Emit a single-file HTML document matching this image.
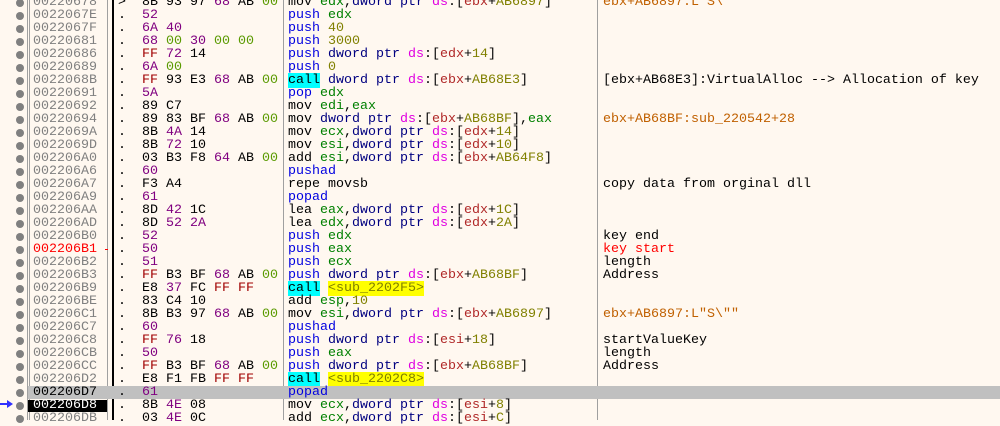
<!DOCTYPE html>
<html><head><meta charset="utf-8"><style>
body{margin:0;width:1000px;height:420px;overflow:hidden;background:#fff8f0;font-family:"Liberation Mono",monospace;font-size:13.33px;}
.r{position:absolute;left:0;width:1000px;height:13px;line-height:13px;white-space:pre;}
.r span{}
.d{position:absolute;left:16px;top:3px;width:8px;height:8px;border-radius:50%;background:#808080;}
.a{position:absolute;left:33px;color:#808080;}
.b{position:absolute;left:118px;color:#000;}
.m{position:absolute;left:288px;color:#000;}
.c{position:absolute;left:603px;color:#000;}
.vl{position:absolute;top:0;height:420px;width:1px;background:#a0a0a0;}
.p{color:#800080}.g{color:#5a9a00}.x{color:#a00000}
.bl{color:#0000e0}.db{color:#000080}.rg{color:#008000}.ds{color:#e000e0}.br{color:#b02828}.n{color:#808000}
.or{color:#c06000}.red{color:#ff0000}
.cy{background:#00ffff;color:#000}.ye{background:#ffff00;color:#808000}
</style></head><body>
<div class="vl" style="left:27px"></div><div class="vl" style="left:29px"></div>
<div class="vl" style="left:107px"></div>
<div class="vl" style="left:112px;width:2px;background:#000"></div>
<div class="vl" style="left:283px"></div><div class="vl" style="left:597px"></div>

<div class="r" style="top:-4px"><div class="d"></div><span class="a">00220678</span><span class="b">&gt;  8B 93 97 <i class="p" style="font-style:normal">68</i> AB <span class="g">00</span></span><span class="m">mov <span class="rg">edx</span>,<span class="db">dword ptr</span> <span class="ds">ds</span>:[<span class="br">ebx</span>+<span class="n">AB6897</span>]</span><span class="c or">ebx+AB6897:L"S\</span></div>
<div class="r" style="top:9px"><div class="d"></div><span class="a">0022067E</span><span class="b">.  <span class="p">52</span></span><span class="m"><span class="bl">push</span> <span class="rg">edx</span></span></div>
<div class="r" style="top:22px"><div class="d"></div><span class="a">0022067F</span><span class="b">.  <span class="p">6A 40</span></span><span class="m"><span class="bl">push</span> <span class="n">40</span></span></div>
<div class="r" style="top:35px"><div class="d"></div><span class="a">00220681</span><span class="b">.  <span class="p">68</span> <span class="g">00</span> <span class="p">30</span> <span class="g">00 00</span></span><span class="m"><span class="bl">push</span> <span class="n">3000</span></span></div>
<div class="r" style="top:48px"><div class="d"></div><span class="a">00220686</span><span class="b">.  <span class="x">FF</span> <span class="p">72</span> 14</span><span class="m"><span class="bl">push</span> <span class="db">dword ptr</span> <span class="ds">ds</span>:[<span class="br">edx</span>+<span class="n">14</span>]</span></div>
<div class="r" style="top:61px"><div class="d"></div><span class="a">00220689</span><span class="b">.  <span class="p">6A</span> <span class="g">00</span></span><span class="m"><span class="bl">push</span> <span class="n">0</span></span></div>
<div class="r" style="top:74px"><div class="d"></div><span class="a">0022068B</span><span class="b">.  <span class="x">FF</span> 93 E3 <span class="p">68</span> AB <span class="g">00</span></span><span class="m"><span class="cy">call</span> <span class="db">dword ptr</span> <span class="ds">ds</span>:[<span class="br">ebx</span>+<span class="n">AB68E3</span>]</span><span class="c">[ebx+AB68E3]:VirtualAlloc --&gt; Allocation of key</span></div>
<div class="r" style="top:87px"><div class="d"></div><span class="a">00220691</span><span class="b">.  <span class="p">5A</span></span><span class="m"><span class="bl">pop</span> <span class="rg">edx</span></span></div>
<div class="r" style="top:100px"><div class="d"></div><span class="a">00220692</span><span class="b">.  89 C7</span><span class="m">mov <span class="rg">edi</span>,<span class="rg">eax</span></span></div>
<div class="r" style="top:113px"><div class="d"></div><span class="a">00220694</span><span class="b">.  89 83 BF <span class="p">68</span> AB <span class="g">00</span></span><span class="m">mov <span class="db">dword ptr</span> <span class="ds">ds</span>:[<span class="br">ebx</span>+<span class="n">AB68BF</span>],<span class="rg">eax</span></span><span class="c or">ebx+AB68BF:sub_220542+28</span></div>
<div class="r" style="top:126px"><div class="d"></div><span class="a">0022069A</span><span class="b">.  8B <span class="p">4A</span> 14</span><span class="m">mov <span class="rg">ecx</span>,<span class="db">dword ptr</span> <span class="ds">ds</span>:[<span class="br">edx</span>+<span class="n">14</span>]</span></div>
<div class="r" style="top:139px"><div class="d"></div><span class="a">0022069D</span><span class="b">.  8B <span class="p">72</span> 10</span><span class="m">mov <span class="rg">esi</span>,<span class="db">dword ptr</span> <span class="ds">ds</span>:[<span class="br">edx</span>+<span class="n">10</span>]</span></div>
<div class="r" style="top:152px"><div class="d"></div><span class="a">002206A0</span><span class="b">.  03 B3 F8 <span class="p">64</span> AB <span class="g">00</span></span><span class="m">add <span class="rg">esi</span>,<span class="db">dword ptr</span> <span class="ds">ds</span>:[<span class="br">ebx</span>+<span class="n">AB64F8</span>]</span></div>
<div class="r" style="top:165px"><div class="d"></div><span class="a">002206A6</span><span class="b">.  <span class="p">60</span></span><span class="m"><span class="bl">pushad</span></span></div>
<div class="r" style="top:178px"><div class="d"></div><span class="a">002206A7</span><span class="b">.  F3 A4</span><span class="m">repe movsb</span><span class="c">copy data from orginal dll</span></div>
<div class="r" style="top:191px"><div class="d"></div><span class="a">002206A9</span><span class="b">.  <span class="p">61</span></span><span class="m"><span class="bl">popad</span></span></div>
<div class="r" style="top:204px"><div class="d"></div><span class="a">002206AA</span><span class="b">.  8D <span class="p">42</span> 1C</span><span class="m">lea <span class="rg">eax</span>,<span class="db">dword ptr</span> <span class="ds">ds</span>:[<span class="br">edx</span>+<span class="n">1C</span>]</span></div>
<div class="r" style="top:217px"><div class="d"></div><span class="a">002206AD</span><span class="b">.  8D <span class="p">52 2A</span></span><span class="m">lea <span class="rg">edx</span>,<span class="db">dword ptr</span> <span class="ds">ds</span>:[<span class="br">edx</span>+<span class="n">2A</span>]</span></div>
<div class="r" style="top:230px"><div class="d"></div><span class="a">002206B0</span><span class="b">.  <span class="p">52</span></span><span class="m"><span class="bl">push</span> <span class="rg">edx</span></span><span class="c">key end</span></div>
<div class="r" style="top:243px"><div class="d"></div><span class="a" style="color:#ff0000">002206B1</span><span style="position:absolute;left:105px;top:6px;width:3px;height:1px;background:#ff0000"></span><span class="b">.  <span class="p">50</span></span><span class="m"><span class="bl">push</span> <span class="rg">eax</span></span><span class="c red">key start</span></div>
<div class="r" style="top:256px"><div class="d"></div><span class="a">002206B2</span><span class="b">.  <span class="p">51</span></span><span class="m"><span class="bl">push</span> <span class="rg">ecx</span></span><span class="c">length</span></div>
<div class="r" style="top:269px"><div class="d"></div><span class="a">002206B3</span><span class="b">.  <span class="x">FF</span> B3 BF <span class="p">68</span> AB <span class="g">00</span></span><span class="m"><span class="bl">push</span> <span class="db">dword ptr</span> <span class="ds">ds</span>:[<span class="br">ebx</span>+<span class="n">AB68BF</span>]</span><span class="c">Address</span></div>
<div class="r" style="top:282px"><div class="d"></div><span class="a">002206B9</span><span class="b">.  E8 <span class="p">37</span> FC <span class="x">FF FF</span></span><span class="m"><span class="cy">call</span> <span class="ye">&lt;sub_2202F5&gt;</span></span></div>
<div class="r" style="top:295px"><div class="d"></div><span class="a">002206BE</span><span class="b">.  83 C4 10</span><span class="m">add <span class="rg">esp</span>,<span class="n">10</span></span></div>
<div class="r" style="top:308px"><div class="d"></div><span class="a">002206C1</span><span class="b">.  8B B3 97 <span class="p">68</span> AB <span class="g">00</span></span><span class="m">mov <span class="rg">esi</span>,<span class="db">dword ptr</span> <span class="ds">ds</span>:[<span class="br">ebx</span>+<span class="n">AB6897</span>]</span><span class="c or">ebx+AB6897:L"S\""</span></div>
<div class="r" style="top:321px"><div class="d"></div><span class="a">002206C7</span><span class="b">.  <span class="p">60</span></span><span class="m"><span class="bl">pushad</span></span></div>
<div class="r" style="top:334px"><div class="d"></div><span class="a">002206C8</span><span class="b">.  <span class="x">FF</span> <span class="p">76</span> 18</span><span class="m"><span class="bl">push</span> <span class="db">dword ptr</span> <span class="ds">ds</span>:[<span class="br">esi</span>+<span class="n">18</span>]</span><span class="c">startValueKey</span></div>
<div class="r" style="top:347px"><div class="d"></div><span class="a">002206CB</span><span class="b">.  <span class="p">50</span></span><span class="m"><span class="bl">push</span> <span class="rg">eax</span></span><span class="c">length</span></div>
<div class="r" style="top:360px"><div class="d"></div><span class="a">002206CC</span><span class="b">.  <span class="x">FF</span> B3 BF <span class="p">68</span> AB <span class="g">00</span></span><span class="m"><span class="bl">push</span> <span class="db">dword ptr</span> <span class="ds">ds</span>:[<span class="br">ebx</span>+<span class="n">AB68BF</span>]</span><span class="c">Address</span></div>
<div class="r" style="top:373px"><div class="d"></div><span class="a">002206D2</span><span class="b">.  E8 F1 FB <span class="x">FF FF</span></span><span class="m"><span class="cy">call</span> <span class="ye">&lt;sub_2202C8&gt;</span></span></div>
<div class="r" style="top:386px"><div style="position:absolute;left:28px;top:0;width:972px;height:13px;background:#c0c0c0"></div><div class="d"></div><span class="a" style="color:#000">002206D7</span><span class="b">.  <span class="p">61</span></span><span class="m"><span class="bl">popad</span></span></div>
<div class="r" style="top:399px"><div style="position:absolute;left:28px;top:1px;width:79px;height:12px;background:#000"></div><div style="position:absolute;left:0;top:4px;width:9px;height:2px;background:#3030ff"></div><div style="position:absolute;left:7px;top:1px;width:0;height:0;border-left:6px solid #3030ff;border-top:4px solid transparent;border-bottom:4px solid transparent"></div><div class="d"></div><span class="a" style="color:#fff">002206D8</span><span class="b">.  8B <span class="p">4E</span> 08</span><span class="m">mov <span class="rg">ecx</span>,<span class="db">dword ptr</span> <span class="ds">ds</span>:[<span class="br">esi</span>+<span class="n">8</span>]</span></div>
<div class="r" style="top:412px"><div class="d"></div><span class="a">002206DB</span><span class="b">.  03 <span class="p">4E</span> 0C</span><span class="m">add <span class="rg">ecx</span>,<span class="db">dword ptr</span> <span class="ds">ds</span>:[<span class="br">esi</span>+<span class="n">C</span>]</span></div>
</body></html>
